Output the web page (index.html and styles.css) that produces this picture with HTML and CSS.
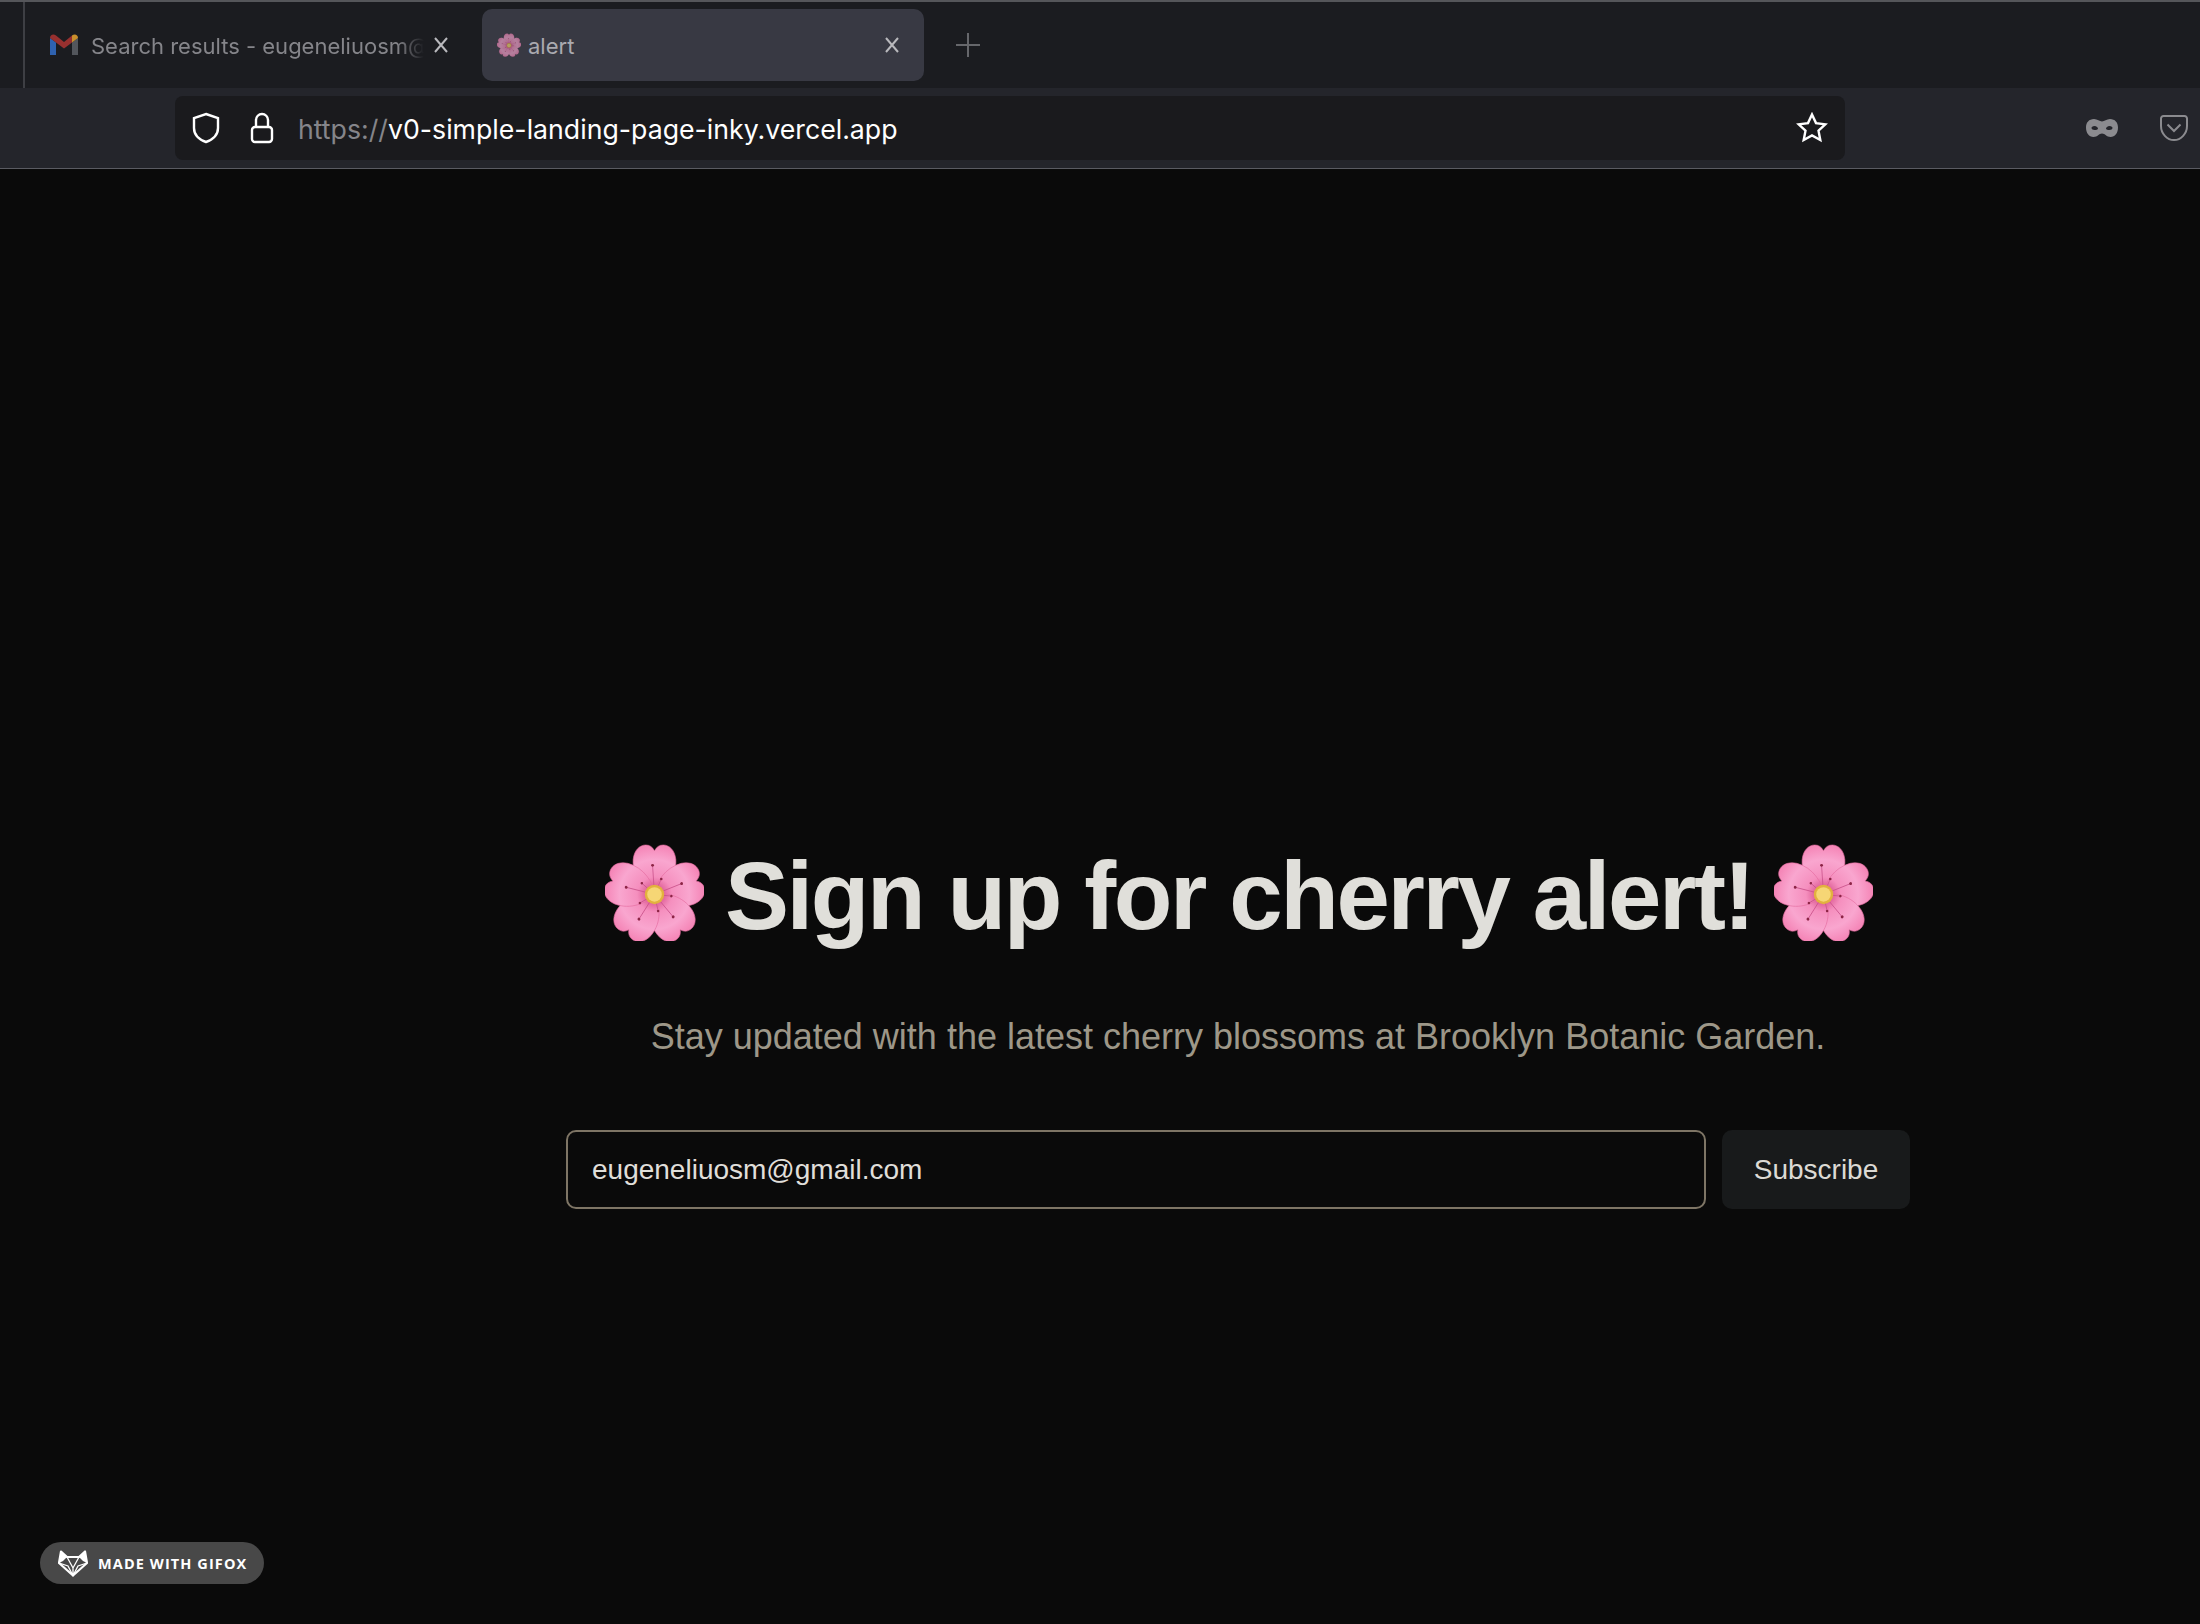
FILE: index.html
```html
<!DOCTYPE html>
<html lang="en">
  <head>
    <meta charset="UTF-8" />
    <title>alert</title>
    <link rel="stylesheet" href="styles.css">
  </head>
  <body>
    <svg class="defs" width="0" height="0">
      <defs>
        <radialGradient id="petalFill" gradientUnits="userSpaceOnUse" cx="51" cy="52" r="50">
          <stop offset="0.12" stop-color="#d9558f" />
          <stop offset="0.36" stop-color="#f58fbe" />
          <stop offset="0.72" stop-color="#f9a6cf" />
          <stop offset="1" stop-color="#f587b8" />
        </radialGradient>
        <path id="petal" d="M51 54C40 46 28 34 29 16C30 6 36 1 42 1C46 1 49 3 51 7C53 3 56 1 60 1C66 1 72 6 73 16C74 34 62 46 51 54Z" fill="url(#petalFill)" stroke="#e56c9f" stroke-width="0.6" />
        <g id="stamen">
          <line x1="51" y1="52" x2="49" y2="22" stroke="#c9528a" stroke-width="0.8" />
          <circle cx="49" cy="22" r="1.500" fill="#8c2445" />
          <line x1="51" y1="52" x2="58" y2="36" stroke="#c9528a" stroke-width="0.8" />
          <circle cx="58" cy="36" r="1.300" fill="#8c2445" />
        </g>
        <symbol id="flower" viewBox="0 0 102 100">
          <use href="#petal" />
          <use href="#petal" transform="rotate(72 51 52)" />
          <use href="#petal" transform="rotate(144 51 52)" />
          <use href="#petal" transform="rotate(216 51 52)" />
          <use href="#petal" transform="rotate(288 51 52)" />
          <use href="#stamen" />
          <use href="#stamen" transform="rotate(72 51 52)" />
          <use href="#stamen" transform="rotate(144 51 52)" />
          <use href="#stamen" transform="rotate(216 51 52)" />
          <use href="#stamen" transform="rotate(288 51 52)" />
          <circle cx="51" cy="52" r="10" fill="#e2b13f" />
          <circle cx="51" cy="52" r="7.500" fill="#f6d675" />
        </symbol>
      </defs>
    </svg>

    <div class="tabstrip">
      <div class="tab">
        <svg class="tab-icon gmail" viewBox="0 0 30 24">
          <path d="M1 22V5l6 4.500V22H1Z" fill="#2f62b0" />
          <path d="M23 22V9.500L29 5v17h-6Z" fill="#53565c" />
          <path d="M1 5C1 1.500 4.500 .5 7 2.500L15 9l8-6.500L23 9.500 15 15.500 7 9.500 1 5Z" fill="#97302f" />
          <path d="M23 2.500C25.500 .5 29 1.500 29 5l-6 4.500V2.500Z" fill="#c98f2c" />
        </svg>
        <span class="tab-title tab-title-fade">Search results - eugeneliuosm@</span>
        <svg class="tab-close" viewBox="0 0 16 16"><path d="M2 1l12 14M14 1L2 15" /></svg>
      </div>
      <div class="tab tab-active">
        <svg class="tab-icon tab-flower" viewBox="0 0 102 100"><use href="#flower" /></svg>
        <span class="tab-title">alert</span>
        <svg class="tab-close" viewBox="0 0 16 16"><path d="M2 1l12 14M14 1L2 15" /></svg>
      </div>
      <svg class="new-tab" viewBox="0 0 24 24"><path d="M12 0v24M0 12h24" /></svg>
    </div>

    <div class="toolbar">
      <div class="urlbar">
        <svg class="url-icon shield" viewBox="0 0 30 32"><path d="M15 2l12 4v10c0 7-5 11.500-12 14C8 27.500 3 23 3 16V6l12-4Z" /></svg>
        <svg class="url-icon lock" viewBox="0 0 24 32"><path d="M6 15V8a6 6 0 0 1 12 0v7" /><rect x="2" y="15" width="20" height="15" rx="3" /></svg>
        <span class="url"><span class="url-scheme">https://</span>v0-simple-landing-page-inky.vercel.app</span>
        <svg class="url-icon star" viewBox="0 0 32 32"><path d="M16 2.500l4 8.600 9.300 1.200-6.800 6.400 1.800 9.300L16 23.400 7.700 28l1.800-9.300-6.800-6.400 9.300-1.200 4-8.600Z" /></svg>
      </div>
      <div class="toolbar-actions">
        <svg class="mask" viewBox="0 0 32 18">
          <path fill-rule="evenodd" d="M8 0c3.500 0 5.500 2.500 8 2.500S20.500 0 24 0c5 0 8 3.500 8 8.500C32 14 29 18 24.500 18c-4 0-5.500-3.500-8.500-3.500S11.500 18 7.500 18C3 18 0 14 0 8.500 0 3.500 3 0 8 0ZM8.500 7C6.500 7 5.500 8 5.500 9S7 11 8.500 11 12 10.500 12 9.500 10.500 7 8.500 7ZM23.500 7C21.500 7 20 8.500 20 9.500S22 11 23.500 11 26.500 10 26.500 9 25.500 7 23.500 7Z" />
        </svg>
        <svg class="pocket" viewBox="0 0 28 26">
          <path d="M3.500 1h21A2.500 2.500 0 0 1 27 3.500V11c0 7.500-6 14-13 14S1 18.500 1 11V3.500A2.500 2.500 0 0 1 3.500 1Z" />
          <path d="M7.500 9.500L14 16l6.500-6.500" />
        </svg>
      </div>
    </div>

    <main class="page">
      <section class="signup">
        <h1 class="signup-title">
          <svg class="flower" viewBox="0 0 102 100"><use href="#flower" /></svg>
          <span class="signup-words">Sign up for cherry alert!</span>
          <svg class="flower" viewBox="0 0 102 100"><use href="#flower" /></svg>
        </h1>
        <p class="signup-text">Stay updated with the latest cherry blossoms at Brooklyn Botanic Garden.</p>
        <form class="signup-form">
          <input class="email" type="email" value="eugeneliuosm@gmail.com" />
          <button class="subscribe" type="button">Subscribe</button>
        </form>
      </section>
    </main>

    <div class="gifox">
      <svg class="gifox-logo" viewBox="0 0 30 27">
        <path d="M3 1.500L9 7h12l6-5.500L29 13 15 25.500 1 13 3 1.500Z" fill="none" stroke="#fff" stroke-width="2.200" stroke-linejoin="round" />
        <path d="M3 1.500L9 7 5 11 1 13ZM27 1.500L21 7l4 4 4 2Z" fill="#fff" />
        <path d="M9 7l6 11 6-11M1 13l9 3 5 9.500 5-9.500 9-3M15 18v7" fill="none" stroke="#fff" stroke-width="1.300" />
      </svg>
      <span>MADE WITH GIFOX</span>
    </div>
  </body>
</html>
```

FILE: styles.css
```css
* {
  box-sizing: border-box;
}

html,
body {
  margin: 0;
  height: 100%;
}

body {
  display: flex;
  flex-direction: column;
  background-color: #0a0a0a;
  font-family: "Liberation Sans", Arial, sans-serif;
  overflow: hidden;
}

.defs {
  position: absolute;
}

/* browser chrome */
.tabstrip {
  display: flex;
  align-items: center;
  gap: 10px;
  height: 88px;
  padding-left: 23px;
  background-color: #1b1c20;
  border-top: 2px solid #55565a;
  flex-shrink: 0;
}

.tab {
  display: flex;
  align-items: center;
  width: 449px;
  height: 72px;
  padding: 0 23px 0 24px;
  border-left: 2px solid #3e3f44;
  color: #85858a;
  font-family: Inter, sans-serif;
  font-size: 22px;
}

.tab:first-child {
  height: 86px;
}

.tab-active {
  width: 442px;
  padding: 0 24px 0 15px;
  border-left: 0;
  border-radius: 10px;
  background-color: #383943;
  color: #aaaab0;
}

.tab-icon {
  flex-shrink: 0;
}

.gmail {
  width: 30px;
  height: 24px;
  margin-right: 12px;
}

.tab-flower {
  width: 24px;
  height: 24px;
  margin-right: 7px;
  opacity: 0.65;
}

.tab-title {
  flex: 1;
  min-width: 0;
  padding-top: 2px;
  white-space: nowrap;
}

.tab-title-fade {
  -webkit-mask-image: linear-gradient(to right, #000 92%, transparent);
  mask-image: linear-gradient(to right, #000 92%, transparent);
}

.tab-close {
  width: 16px;
  height: 16px;
  margin-left: 9px;
  flex-shrink: 0;
  fill: none;
  stroke: #b9b9bd;
  stroke-width: 2;
}

.new-tab {
  width: 24px;
  height: 24px;
  margin-left: 22px;
  fill: none;
  stroke: #66676b;
  stroke-width: 2;
}

.toolbar {
  display: flex;
  align-items: center;
  justify-content: space-between;
  height: 81px;
  padding: 0 12px 0 175px;
  background-color: #24252b;
  border-bottom: 1px solid #5a5b62;
  flex-shrink: 0;
}

.urlbar {
  display: flex;
  align-items: center;
  width: 1670px;
  height: 64px;
  padding: 0 17px 0 16px;
  border-radius: 8px;
  background-color: #1a1a1d;
}

.url-icon {
  flex-shrink: 0;
  fill: none;
  stroke: #fff;
  stroke-width: 2.4;
}

.shield {
  width: 30px;
  height: 32px;
}

.lock {
  width: 24px;
  height: 32px;
  margin-left: 29px;
}

.url {
  flex: 1;
  margin-left: 24px;
  padding-top: 2px;
  color: #fff;
  font-family: Inter, sans-serif;
  font-size: 26.7px;
  white-space: nowrap;
}

.url-scheme {
  color: #85858a;
}

.star {
  width: 32px;
  height: 32px;
}

.toolbar-actions {
  display: flex;
  align-items: center;
  gap: 42px;
}

.mask {
  width: 32px;
  height: 18px;
  fill: #8b8b8f;
}

.pocket {
  width: 28px;
  height: 26px;
  fill: none;
  stroke: #8b8b8f;
  stroke-width: 2;
}

/* landing page */
.page {
  flex: 1;
  padding: 672px 0 0 276px;
}

.signup {
  display: flex;
  flex-direction: column;
  align-items: center;
  width: 1344px;
  margin: 0 auto;
}

.signup-title {
  display: flex;
  align-items: flex-start;
  gap: 21px;
  margin: 3px 0 0 2px;
  color: #e0dfda;
  font-size: 96px;
  font-weight: 700;
  line-height: 1;
  letter-spacing: -2.4px;
}

.signup-words {
  margin-top: 4px;
}

.flower {
  width: 99px;
  height: 97px;
}

.signup-text {
  margin: 71px 0 0;
  color: #9d9788;
  font-size: 36px;
  line-height: 1.2;
}

.signup-form {
  display: flex;
  gap: 16px;
  width: 100%;
  margin-top: 72px;
}

.email {
  flex: 1;
  height: 79px;
  padding: 0 24px;
  border: 2px solid #7e7565;
  border-radius: 10px;
  background-color: #0a0a0a;
  color: #e0dfda;
  font-family: "Liberation Sans", Arial, sans-serif;
  font-size: 28px;
}

.subscribe {
  width: 188px;
  height: 79px;
  border: none;
  border-radius: 10px;
  background-color: #181a1b;
  color: #dcdad5;
  font-family: "Liberation Sans", Arial, sans-serif;
  font-size: 28px;
}

/* watermark sits on top of the recording */
.gifox {
  position: absolute;
  left: 40px;
  bottom: 40px;
  display: flex;
  align-items: center;
  gap: 10px;
  width: 224px;
  height: 42px;
  padding-left: 18px;
  border-radius: 21px;
  background-color: #484848;
  color: #fff;
  font-family: "Open Sans", sans-serif;
  font-size: 14.5px;
  font-weight: 700;
  letter-spacing: 1.1px;
}

.gifox-logo {
  width: 30px;
  height: 27px;
  flex-shrink: 0;
}
```
